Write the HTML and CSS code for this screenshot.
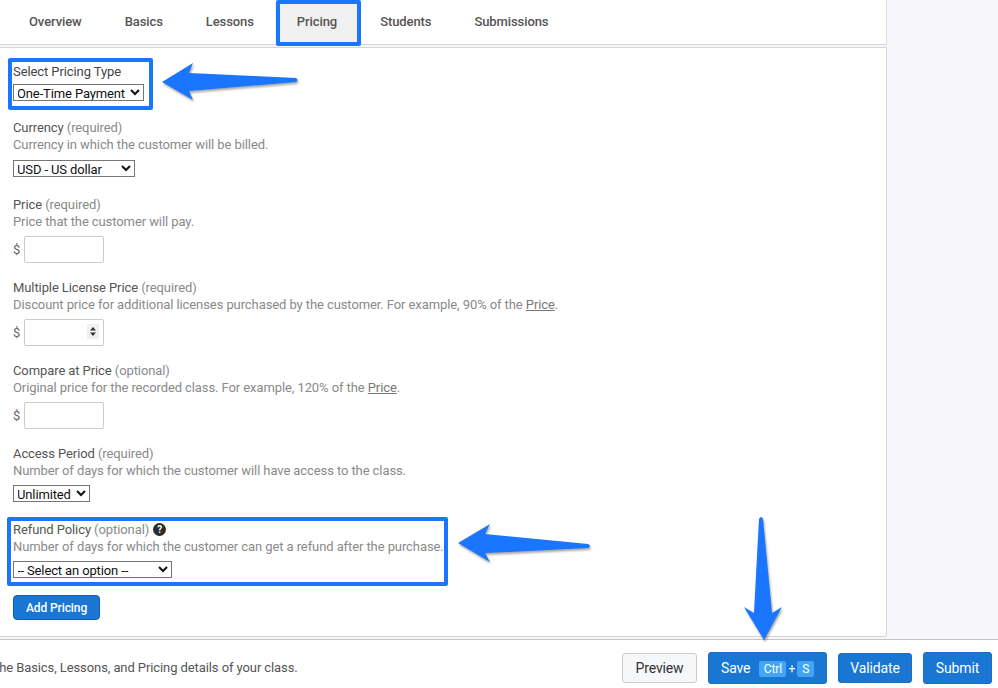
FILE: index.html
```html
<!DOCTYPE html>
<html lang="en">
<head>
<meta charset="utf-8">
<title>Pricing</title>
<link rel="stylesheet" href="styles.css">
</head>
<body>
<div class="page">
  <div class="content">
    <nav class="tabs">
      <a class="tab">Overview</a>
      <a class="tab">Basics</a>
      <a class="tab">Lessons</a>
      <a class="tab active">Pricing</a>
      <a class="tab">Students</a>
      <a class="tab">Submissions</a>
    </nav>
    <main class="card">
      <div class="field first">
        <label class="dark">Select Pricing Type</label>
        <select class="s-type"><option>One-Time Payment</option></select>
      </div>
      <div class="field">
        <label>Currency <span class="muted">(required)</span></label>
        <p class="hint wide">Currency in which the customer will be billed.</p>
        <select class="s-cur"><option>USD - US dollar</option></select>
      </div>
      <div class="field tight">
        <label>Price <span class="muted">(required)</span></label>
        <p class="hint">Price that the customer will pay.</p>
        <div class="money"><span>$</span><input type="text"></div>
      </div>
      <div class="field tight">
        <label>Multiple License Price <span class="muted">(required)</span></label>
        <p class="hint">Discount price for additional licenses purchased by the customer. For example, 90% of the <u>Price</u>.</p>
        <div class="money"><span>$</span><span class="num"><input type="number"><svg class="spinner" width="12" height="15" viewBox="0 0 12 15"><rect width="12" height="15" fill="#f0f0f0"/><path d="M6 3 L9 6.5 H3 Z M3 8.5 H9 L6 12 Z" fill="#333"/></svg></span></div>
      </div>
      <div class="field tight">
        <label>Compare at Price <span class="muted">(optional)</span></label>
        <p class="hint">Original price for the recorded class. For example, 120% of the <u>Price</u>.</p>
        <div class="money"><span>$</span><input type="text"></div>
      </div>
      <div class="field">
        <label>Access Period <span class="muted">(required)</span></label>
        <p class="hint">Number of days for which the customer will have access to the class.</p>
        <select class="s-acc"><option>Unlimited</option></select>
      </div>
      <div class="field refund">
        <label>Refund Policy <span class="muted">(optional)</span> <span class="help">?</span></label>
        <p class="hint">Number of days for which the customer can get a refund after the purchase.</p>
        <select class="s-ref"><option>-- Select an option --</option></select>
      </div>
      <button class="btn add">Add Pricing</button>
    </main>
  </div>
  <footer class="footer">
    <p class="note">the Basics, Lessons, and Pricing details of your class.</p>
    <button class="btn light">Preview</button>
    <button class="btn save"><span class="save-label">Save</span><kbd class="k-ctrl">Ctrl</kbd><i>+</i><kbd class="k-s">S</kbd></button>
    <button class="btn validate">Validate</button>
    <button class="btn submit">Submit</button>
  </footer>
</div>

<div class="mark m-tab"></div>
<div class="mark m-type"></div>
<div class="mark m-ref"></div>

<svg class="arrow a1" width="146" height="46" viewBox="0 0 146 46"><path d="M1 20 L32 1 L28 11 L135 16 Q138 18 135 20 L28 29 L32 38 Z"/></svg>
<svg class="arrow a2" width="142" height="46" viewBox="0 0 142 46"><path d="M1 20 L33 1 L28 11 L131 21 Q135 23 131 25 L28 30 L33 39 Z"/></svg>
<svg class="arrow a3" width="46" height="130" viewBox="0 0 46 130"><path d="M18 4 Q20 0 22 4 L31 98 L41 92 L23 125 L3 92 L13 98 Z"/></svg>
</body>
</html>
```
FILE: styles.css
```css
* { box-sizing: border-box; }
html, body { margin: 0; height: 100%; }
body {
  background: #f7f7fb;
  font-family: Roboto, "Liberation Sans", sans-serif;
  font-size: 13px;
  line-height: 17px;
  letter-spacing: -0.09px;
  color: #555;
  overflow: hidden;
}
.page { width: 998px; height: 688px; display: flex; flex-direction: column; }
.content { width: 887px; flex: 1; display: flex; flex-direction: column; }

.tabs {
  height: 45px;
  padding: 3px 0 2px 7.5px;
  display: flex;
  background: #fff;
  border-right: 1px solid #ddd;
  border-bottom: 1px solid #d6d6d6;
}
.tab {
  display: flex;
  align-items: center;
  padding: 0 21.5px 2px;
  font-weight: 500;
  color: #555;
}
.tab.active { background: #f0f0f0; }

.card {
  margin-top: 2px;
  height: 590px;
  padding: 15px 13px 0;
  background: #fff;
  border: 1px solid #d6d6d6;
  border-left: 0;
  border-radius: 0 0 3px 0;
}
.field { margin-bottom: 19px; }
.field.first { margin-bottom: 18px; }
.field.tight { margin-bottom: 16px; }
.field.refund { margin-bottom: 17px; }
.field label { display: block; color: #555; }
.field label.dark { color: #444; }
.muted { color: #8a8a8a; }
.hint { margin: 0 0 6px; color: #8a8a8a; }
.hint.wide { margin-bottom: 7px; }
.hint u { color: #777; }
select {
  display: block;
  height: 17px;
  padding: 0;
  font: 13px/15px Roboto, "Liberation Sans", sans-serif;
  letter-spacing: -0.13px;
  text-indent: -1px;
  color: #111;
  background: #fff;
  border: 1px solid #767676;
  border-radius: 0;
}
.first select { margin-top: 4px; }
.s-type { width: 131px; }
.s-cur { width: 122px; margin-bottom: 1px; }
.s-acc { width: 77px; }
.s-ref { width: 159px; }
.money { display: flex; align-items: center; gap: 4px; height: 27px; color: #666; }
.money input {
  width: 80px;
  height: 27px;
  padding: 0 4px;
  border: 1px solid #ccc;
  border-radius: 2px;
  background: #fff;
  appearance: textfield;
}
.num { position: relative; display: block; height: 27px; }
.spinner { position: absolute; right: 5px; top: 5px; }
.help {
  display: inline-block;
  width: 13px;
  height: 13px;
  margin-left: 1px;
  border-radius: 50%;
  background: #2b2b2b;
  color: #fff;
  font-size: 10px;
  font-weight: 700;
  line-height: 13px;
  text-align: center;
  vertical-align: 1px;
}
.btn {
  height: 30px;
  padding: 0;
  font: 400 14px/1 Roboto, "Liberation Sans", sans-serif;
  letter-spacing: -0.15px;
  color: #fff;
  background: #1976d2;
  border: 1px solid #1a6fc4;
  border-radius: 3px;
}
.add {
  display: block;
  height: 25px;
  width: 87px;
  font-size: 12px;
  font-weight: 500;
  letter-spacing: -0.09px;
  border-color: #155fa8;
  border-radius: 4px;
}
.footer {
  height: 49px;
  display: flex;
  align-items: center;
  gap: 11px;
  padding: 8px 6px 0 0;
  background: #fff;
  border-top: 1px solid #c4c4c4;
}
.note { margin: -2px auto 0 -5px; color: #555; }
.light { background: #f6f7f8; border-color: #ccc; color: #333; width: 75px; padding-bottom: 1px; }
.validate { width: 74px; padding-bottom: 1px; }
.submit { width: 69px; height: 32px; padding-bottom: 1px; }
.save { display: flex; align-items: center; height: 32px; width: 119px; padding-left: 12px; }
.save-label { margin-bottom: 1px; }
.save kbd {
  display: block;
  height: 16px;
  margin-top: 2px;
  font: 400 12px/16px Roboto, sans-serif;
  text-align: center;
  background: #42a5f5;
  border-radius: 2px;
}
.save kbd.k-ctrl { width: 27px; margin-left: 9px; }
.save kbd.k-s { width: 17px; }
.save i { width: 11px; font-style: normal; font-size: 12px; text-align: center; margin-top: 1px; }

.mark { position: absolute; border: 4px solid #1a75ff; border-radius: 2px; }
.m-tab { left: 276px; top: 0; width: 85px; height: 46px; }
.m-type { left: 8px; top: 58px; width: 145px; height: 52px; }
.m-ref { left: 7px; top: 517px; width: 441px; height: 69px; }
.arrow { position: absolute; fill: #1a75ff; filter: drop-shadow(1px 2px 1px rgba(0,0,0,.35)); }
.a1 { left: 161px; top: 62px; }
.a2 { left: 457px; top: 523px; }
.a3 { left: 741px; top: 515px; }
```
